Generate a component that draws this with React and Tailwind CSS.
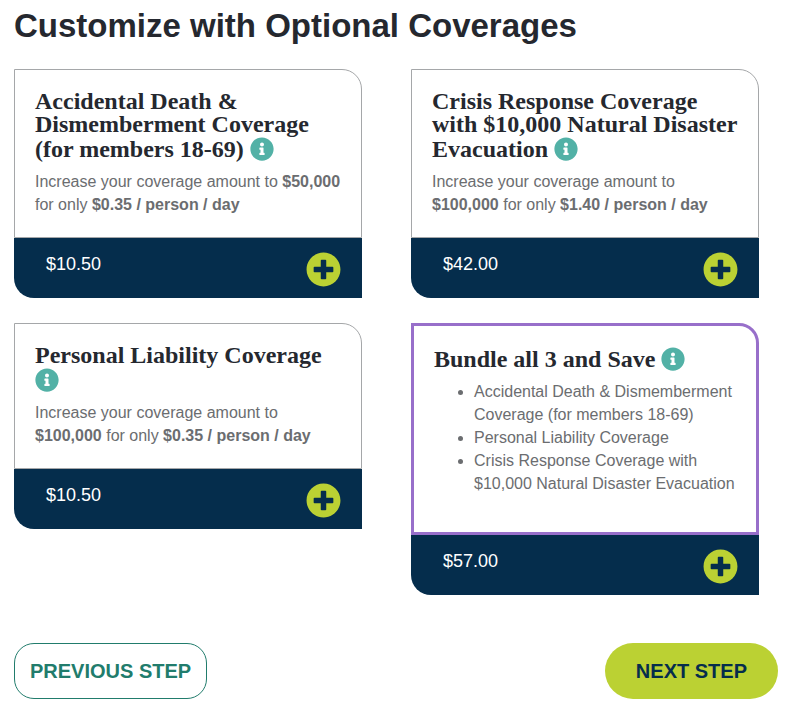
import React from 'react'
import { FaInfoCircle, FaPlusCircle } from 'react-icons/fa'

function CoverageCard({ title, price, featured, children }) {
  return (
    <article>
      <div className={`rounded-tr-[20px] px-5 pt-5 pb-[21px] ${featured ? 'border-3 border-[#986fca]' : 'border border-[#a5a7a9]'}`}>
        <h2 className="mb-[9px] font-['Liberation_Serif',serif] text-2xl leading-[23px] font-bold text-[#25282f]">
          {title}{' '}
          <button type="button" aria-label={`About ${title}`} className="inline-block pt-px align-[-4px] text-[#52b1a6]">
            <FaInfoCircle className="size-6" />
          </button>
        </h2>
        {children}
      </div>
      <div className="flex justify-between rounded-bl-[20px] bg-[#052d4c] pt-[14px] pr-[21px] pb-[11px] pl-8 text-white">
        <span className="text-lg leading-6">{price}</span>
        <button type="button" aria-label={`Add ${title}`} className="text-[#bbd133]">
          <FaPlusCircle className="size-[35px]" />
        </button>
      </div>
    </article>
  )
}

function Amount({ amount, rate }) {
  return (
    <p>
      Increase your coverage amount to <strong>{amount}</strong> for only <strong>{rate} / person / day</strong>
    </p>
  )
}

export default function App() {
  return (
    <main className="bg-white pt-1.5 pr-2 pb-2 pl-[14px] font-['Liberation_Sans',sans-serif] text-base leading-[23px] text-[#6b6d70]">
      <h1 className="mb-[23px] text-[33px] leading-10 font-bold text-[#25282f]">Customize with Optional Coverages</h1>
      <div className="mr-[19px] grid grid-cols-2 items-start gap-x-[49px] gap-y-[25px]">
        <CoverageCard title="Accidental Death & Dismemberment Coverage (for members 18-69)" price="$10.50">
          <Amount amount="$50,000" rate="$0.35" />
        </CoverageCard>
        <CoverageCard title="Crisis Response Coverage with $10,000 Natural Disaster Evacuation" price="$42.00">
          <Amount amount="$100,000" rate="$1.40" />
        </CoverageCard>
        <CoverageCard title="Personal Liability Coverage" price="$10.50">
          <Amount amount="$100,000" rate="$0.35" />
        </CoverageCard>
        <CoverageCard title="Bundle all 3 and Save" price="$57.00" featured>
          <ul className="mb-4 list-disc pl-10">
            <li>Accidental Death & Dismemberment Coverage (for members 18-69)</li>
            <li>Personal Liability Coverage</li>
            <li>Crisis Response Coverage with $10,000 Natural Disaster Evacuation</li>
          </ul>
        </CoverageCard>
      </div>
      <div className="mt-12 flex justify-between text-xl leading-6 font-bold">
        <button type="button" className="rounded-[20px] border border-[#217c6c] px-[15px] py-[15px] text-[#217c6c]">PREVIOUS STEP</button>
        <button type="button" className="rounded-[28px] bg-[#bbd133] px-[31px] py-4 text-[#052d4c]">NEXT STEP</button>
      </div>
    </main>
  )
}
